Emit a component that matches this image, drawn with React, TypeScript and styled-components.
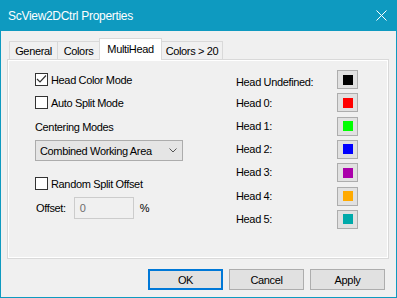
import React from 'react';
import styled, { createGlobalStyle } from 'styled-components';

const accent = '#0e9ac0';

const GlobalStyle = createGlobalStyle`
  html, body {
    margin: 0;
    padding: 0;
    background: #ffffff;
  }
  body {
    font-family: 'Liberation Sans', Arial, sans-serif;
  }
`;

const Window = styled.div`
  width: 397px;
  height: 298px;
  box-sizing: border-box;
  border: 1px solid ${accent};
  border-top: none;
  background: #f0f0f0;
  display: flex;
  flex-direction: column;
  font-family: 'Liberation Sans', Arial, sans-serif;
  font-size: 11px;
  letter-spacing: -0.35px;
  color: #000;
`;

const TitleBar = styled.div`
  height: 31px;
  margin: 0 -1px;
  padding: 0 10px 0 8px;
  background: ${accent};
  color: #fff;
  font-size: 12px;
  letter-spacing: -0.3px;
  display: flex;
  align-items: center;
  justify-content: space-between;
`;

const Body = styled.div`
  flex: 1;
  padding: 7px 7px 0 6px;
  display: flex;
  flex-direction: column;
`;

const TabStrip = styled.div`
  display: flex;
  align-items: flex-end;
  height: 21px;
  margin-left: 2px;
`;

const Tab = styled.div<{ $width: number; $active?: boolean; $first?: boolean }>`
  position: relative;
  box-sizing: border-box;
  width: ${(p) => p.$width}px;
  height: ${(p) => (p.$active ? 22 : 18)}px;
  margin-bottom: ${(p) => (p.$active ? -1 : 0)}px;
  margin-left: ${(p) => (p.$first ? 0 : -1)}px;
  z-index: ${(p) => (p.$active ? 2 : 1)};
  border: 1px solid #d9d9d9;
  border-bottom: none;
  background: ${(p) => (p.$active ? '#ffffff' : '#f0f0f0')};
  display: flex;
  align-items: center;
  justify-content: center;
  padding-bottom: ${(p) => (p.$active ? 1 : 0)}px;
`;

const Panel = styled.div`
  box-sizing: border-box;
  height: 200px;
  border: 1px solid #d9d9d9;
  box-shadow: inset 0 0 0 1px #ffffff;
  display: grid;
  grid-template-columns: 1fr 152px;
  padding: 9px 0 0 27px;
`;

const LeftColumn = styled.div`
  display: flex;
  flex-direction: column;
`;

const CheckRow = styled.label<{ $top: number }>`
  display: flex;
  align-items: center;
  gap: 3px;
  height: 13px;
  margin-top: ${(p) => p.$top}px;
`;

const Box = styled.span`
  box-sizing: border-box;
  width: 13px;
  height: 13px;
  border: 1px solid #333333;
  background: #ffffff;
  display: flex;
  align-items: center;
  justify-content: center;
`;

const Caption = styled.div<{ $top: number }>`
  height: 13px;
  line-height: 13px;
  margin-top: ${(p) => p.$top}px;
`;

const Combo = styled.div`
  box-sizing: border-box;
  width: 148px;
  height: 21px;
  margin-top: 6px;
  padding: 0 5px 0 4px;
  border: 1px solid #acacac;
  background: #e5e5e5;
  display: flex;
  align-items: center;
  justify-content: space-between;
`;

const OffsetRow = styled.div`
  display: flex;
  align-items: center;
  height: 22px;
  margin-top: 7px;
  padding-left: 1px;
`;

const OffsetInput = styled.div`
  box-sizing: border-box;
  width: 60px;
  height: 22px;
  margin: 0 6px 0 8px;
  padding-left: 5px;
  border: 1px solid #cccccc;
  background: #f0f0f0;
  color: #6d6d6d;
  display: flex;
  align-items: center;
`;

const RightColumn = styled.div`
  display: grid;
  grid-auto-rows: 19px;
  row-gap: 4.333px;
  padding-top: 1px;
`;

const HeadRow = styled.div`
  display: grid;
  grid-template-columns: 101px 21px;
`;

const HeadLabel = styled.div<{ $drop: number }>`
  padding-top: ${(p) => p.$drop}px;
  line-height: 19px;
`;

const SwatchButton = styled.div`
  box-sizing: border-box;
  width: 21px;
  height: 19px;
  border: 1px solid #adadad;
  background: #e1e1e1;
  display: flex;
  align-items: center;
  justify-content: center;
`;

const Swatch = styled.span<{ $color: string }>`
  width: 10px;
  height: 10px;
  background: ${(p) => p.$color};
`;

const Footer = styled.div`
  display: flex;
  justify-content: flex-end;
  gap: 6px;
  padding: 10px 4px 0 0;
`;

const Button = styled.div<{ $default?: boolean }>`
  box-sizing: border-box;
  width: 75px;
  height: 21px;
  border: ${(p) => (p.$default ? '2px solid #0078d7' : '1px solid #adadad')};
  background: #e1e1e1;
  display: flex;
  align-items: center;
  justify-content: center;
`;

const heads = [
  { label: 'Head Undefined:', color: '#000000', drop: 3 },
  { label: 'Head 0:', color: '#ff0000', drop: 1 },
  { label: 'Head 1:', color: '#00ff00', drop: 0 },
  { label: 'Head 2:', color: '#0000ff', drop: 0 },
  { label: 'Head 3:', color: '#aa00aa', drop: 0 },
  { label: 'Head 4:', color: '#ffaa00', drop: 0 },
  { label: 'Head 5:', color: '#00aaaa', drop: 0 },
];

const Check = ({ checked }: { checked?: boolean }) => (
  <Box>
    {checked ? (
      <svg width="11" height="11" viewBox="0 0 11 11">
        <polyline points="1,5 4,8 10,1.5" fill="none" stroke="#333" strokeWidth="1.2" />
      </svg>
    ) : null}
  </Box>
);

export default function App() {
  return (
    <>
      <GlobalStyle />
      <Window>
        <TitleBar>
          <span>ScView2DCtrl Properties</span>
          <svg width="11" height="11" viewBox="0 0 11 11">
            <path d="M0.5 0.5 L10.5 10.5 M10.5 0.5 L0.5 10.5" stroke="#fff" strokeWidth="1" />
          </svg>
        </TitleBar>
        <Body>
          <TabStrip>
            <Tab $width={49} $first>General</Tab>
            <Tab $width={43}>Colors</Tab>
            <Tab $width={63} $active>MultiHead</Tab>
            <Tab $width={62}>Colors &gt; 20</Tab>
          </TabStrip>
          <Panel>
            <LeftColumn>
              <CheckRow $top={4}>
                <Check checked />
                Head Color Mode
              </CheckRow>
              <CheckRow $top={10}>
                <Check />
                Auto Split Mode
              </CheckRow>
              <Caption $top={12}>Centering Modes</Caption>
              <Combo>
                <span>Combined Working Area</span>
                <svg width="8" height="5" viewBox="0 0 8 5">
                  <polyline points="0.5,0.5 4,4 7.5,0.5" fill="none" stroke="#555" strokeWidth="1" />
                </svg>
              </Combo>
              <CheckRow $top={16}>
                <Check />
                Random Split Offset
              </CheckRow>
              <OffsetRow>
                Offset:
                <OffsetInput>0</OffsetInput>%
              </OffsetRow>
            </LeftColumn>
            <RightColumn>
              {heads.map((h) => (
                <HeadRow key={h.label}>
                  <HeadLabel $drop={h.drop}>{h.label}</HeadLabel>
                  <SwatchButton>
                    <Swatch $color={h.color} />
                  </SwatchButton>
                </HeadRow>
              ))}
            </RightColumn>
          </Panel>
          <Footer>
            <Button $default>OK</Button>
            <Button>Cancel</Button>
            <Button>Apply</Button>
          </Footer>
        </Body>
      </Window>
    </>
  );
}
